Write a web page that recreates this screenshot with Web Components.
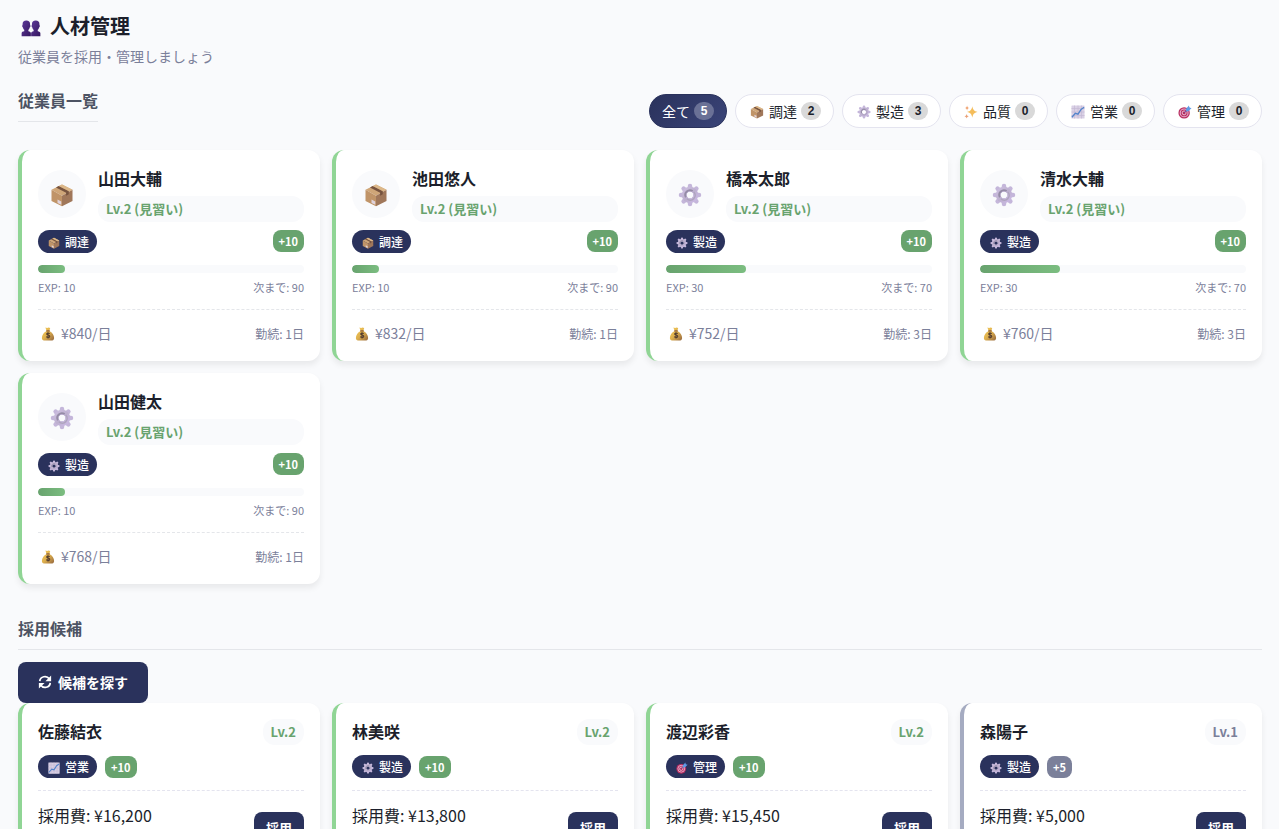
<!DOCTYPE html>
<html lang="ja">
<head>
<meta charset="utf-8">
<meta name="viewport" content="width=device-width, initial-scale=1">
<title>人材管理</title>
<style>
html {
	--navy: #2a325c;
	--green: #68a36e;
	--line: #e4e6ea;
	--muted: #7b809a;
	--soft: #f9fafc;
	background: var(--soft);
}

body {
	margin: 0;
	color: #1c1f2b;
	font: 16px/26px "Noto Sans CJK JP", sans-serif;
}
</style>
</head>
<body>
<staff-page></staff-page>

<script>
const ICONS = {
	people: `
<defs><linearGradient id="a" x2="1" y2="1"><stop stop-color="#5c3799"/><stop offset="1" stop-color="#35175f"/></linearGradient></defs>
<g fill="url(#a)">
<path d="M8.500 4c4 0 6 2 6 6v1c1 1 .8 3.500-.6 4-.4 2-1.100 3-2.100 3.800V21c2.500.3 4 1.300 4 3.500V29H1v-4.500C1 22 2.700 21.300 5.200 21v-2.200c-1-.8-1.700-1.800-2.100-3.800-1.400-.5-1.600-3-.6-4v-1c0-4 2-6 6-6z"/>
<path d="M23.500 4c4 0 6 2 6 6v1c1 1 .8 3.500-.6 4-.4 2-1.100 3-2.100 3.800V21c2.500.3 4.200 1.300 4.200 3.500V29H16.200v-4.500c0-2.200 1.500-3.200 4-3.500v-2.200c-1-.8-1.700-1.800-2.100-3.800-1.400-.5-1.600-3-.6-4v-1c0-4 2-6 6-6z"/>
</g>`,
	box: `
<path fill="#cfa678" d="M16 2 30 9 16 17 2 9z"/>
<path fill="#c09468" d="M2 9l14 8v14L2 24z"/>
<path fill="#a0775a" d="M30 9l-14 8v14l14-7z"/>
<path fill="#76533f" d="M8 6 11.500 4 25 11v4L21.500 17v-4z"/>
<path fill="#dcb88a" d="M12 4l4-2 14 7-4 2z"/>
<path fill="#e0d3dc" d="M10 22l5 2.500V29l-5-2.500z"/>`,
	gear: `
<defs><linearGradient id="a" x2="1" y2="1"><stop stop-color="#cbbdde"/><stop offset=".5" stop-color="#bdb0cf"/><stop offset="1" stop-color="#c9b8e2"/></linearGradient></defs>
<g fill="none" stroke="#c4b6da" stroke-width="6" stroke-linecap="round">
<path d="M16 4v5M16 23v5M4 16h5M23 16h5M7.500 7.500l3.500 3.500M21 21l3.500 3.500M24.500 7.500 21 11M11 21l-3.500 3.500"/>
</g>
<circle cx="16" cy="16" r="8" fill="none" stroke="url(#a)" stroke-width="6"/>
<path d="M10.500 19a6.300 6.300 0 0 1 9-8.300" fill="none" stroke="#958ca6" stroke-width="2.500"/>
<path d="M21 12a6.300 6.300 0 0 1-9 9" fill="none" stroke="#aea4bd" stroke-width="2"/>`,
	sparkles: `
<path fill="#f4bd5b" d="M19 3c1.500 8 4 11 12 13-8 2-10.500 5-12 13-1.500-8-4-11-12-13 8-2 10.500-5 12-13z"/>
<path fill="#ef9d67" d="M7 1c.6 4 1.500 5 5 6-3.500 1-4.400 2-5 6-.6-4-1.500-5-5-6 3.500-1 4.400-2 5-6z"/>
<path fill="#eaa177" d="M6 20c.6 4 1.500 5 5 6-3.500 1-4.400 2-5 5-.6-3-1.500-4-5-5 3.500-1 4.400-2 5-6z"/>`,
	chart: `
<rect x="1" y="1" width="30" height="30" rx="1" fill="#d9d0e5"/>
<path d="M1 8h30M1 16h30M1 24h30M8 1v30M16 1v30M24 1v30" stroke="#c3b7d3" stroke-width="1.500"/>
<path d="M2 28l8-9 6 2 7-11 7-5" fill="none" stroke="#5283cb" stroke-width="3"/>`,
	target: `
<circle cx="14" cy="18" r="13" fill="#b92d60"/>
<circle cx="14" cy="18" r="9" fill="none" stroke="#e6b1cf" stroke-width="2.500"/>
<circle cx="14" cy="18" r="4.500" fill="none" stroke="#ead0e2" stroke-width="2"/>
<path d="M14 18 26 6" stroke="#6a4894" stroke-width="2"/>
<path fill="#5d9be6" d="M18 9l7-8 1 5 5 1-7 7-6 1z"/>`,
	money: `
<defs><linearGradient id="a" x2="1" y2="1"><stop stop-color="#f5cb58"/><stop offset=".5" stop-color="#deb04e"/><stop offset="1" stop-color="#94663e"/></linearGradient></defs>
<path fill="url(#a)" d="M10 1l4 1 3-1 4 1-2 7c7 3 11 10 11 16 0 5-4 6-7 6H9c-4 0-7-2-7-6C2 19 6 12 13 9z"/>
<path d="M12 9h8" stroke="#926139" stroke-width="3"/>
<path d="M20 15c-2-2-7-2-7 1s7 2 7 5-5 4-8 1M16 12v14" fill="none" stroke="#503a2e" stroke-width="2.500"/>`,
	refresh: `
<path d="M4 14C5 3 20 0 26 9M28 18C27 29 12 32 6 23" fill="none" stroke="#fff" stroke-width="4"/>
<path fill="#fff" d="M30 1v13H17zM2 31V18h13z"/>`
};

const ROLES = {
	procure: {label: '調達', icon: 'box'},
	make: {label: '製造', icon: 'gear'},
	quality: {label: '品質', icon: 'sparkles'},
	sales: {label: '営業', icon: 'chart'},
	manage: {label: '管理', icon: 'target'}
};

const EMPLOYEES = [
	{name: '山田大輔', role: 'procure', exp: 10, pay: 840, days: 1},
	{name: '池田悠人', role: 'procure', exp: 10, pay: 832, days: 1},
	{name: '橋本太郎', role: 'make', exp: 30, pay: 752, days: 3},
	{name: '清水大輔', role: 'make', exp: 30, pay: 760, days: 3},
	{name: '山田健太', role: 'make', exp: 10, pay: 768, days: 1}
];

const CANDIDATES = [
	{name: '佐藤結衣', role: 'sales', level: 2, bonus: 10, fee: '16,200'},
	{name: '林美咲', role: 'make', level: 2, bonus: 10, fee: '13,800'},
	{name: '渡辺彩香', role: 'manage', level: 2, bonus: 10, fee: '15,450'},
	{name: '森陽子', role: 'make', level: 1, bonus: 5, fee: '5,000'}
];

const render = (host, html) => {
	host.attachShadow({mode: 'open'}).innerHTML = html;
};

class GameIcon extends HTMLElement {
	connectedCallback() {
		render(this, `
<style>
:host { display: inline-flex; flex: none; align-items: center; justify-content: center; }
svg { display: block; width: var(--icon-size, 14px); height: var(--icon-size, 14px); }
</style>
<svg viewBox="0 0 32 32" aria-hidden="true">${ICONS[this.getAttribute('name')]}</svg>`);
	}
}

class FilterTab extends HTMLElement {
	connectedCallback() {
		const icon = this.getAttribute('icon');
		render(this, `
<style>
:host { display: block; }
button {
	display: flex;
	align-items: center;
	gap: 4px;
	height: 34px;
	padding: 0 12px;
	border: 1px solid #e4e4ef;
	border-radius: 20px;
	background: #fff;
	color: #1c1f2b;
	font: 14px/22px "Liberation Sans", "Noto Sans CJK JP", sans-serif;
	cursor: pointer;
}
game-icon { width: 17px; padding-top: 2px; box-sizing: border-box; }
.label { padding-top: 2px; }
.count {
	box-sizing: border-box;
	min-width: 20px;
	padding: 0 6px;
	border-radius: 10px;
	background: #d9d9d9;
	font-size: 12px;
	font-weight: 700;
	line-height: 18px;
	text-align: center;
}
:host([active]) button {
	border-color: var(--navy);
	background: linear-gradient(135deg, #2a325c, #3a4478);
	color: #fff;
}
:host([active]) .count { background: #6a7196; }
</style>
<button type="button">${icon ? `<game-icon name="${icon}"></game-icon>` : ''}<span class="label"><slot></slot></span><span class="count">${this.getAttribute('count')}</span></button>`);
	}
}

class RoleChip extends HTMLElement {
	connectedCallback() {
		const role = ROLES[this.getAttribute('role-id')];
		render(this, `
<style>
:host {
	display: inline-flex;
	align-items: center;
	gap: 4px;
	padding: 2px 8px;
	border-radius: 12px;
	background: var(--navy);
	color: #fff;
	font-size: 12px;
	font-weight: 500;
	line-height: 19px;
}
game-icon { --icon-size: 12px; width: 15px; padding-top: 2px; box-sizing: border-box; }
</style>
<game-icon name="${role.icon}"></game-icon><span>${role.label}</span>`);
	}
}

class BonusBadge extends HTMLElement {
	connectedCallback() {
		render(this, `
<style>
:host {
	display: inline-block;
	padding: 2px 6px;
	border-radius: 8px;
	background: var(--green);
	color: #fff;
	font-size: 11px;
	font-weight: 700;
	line-height: 18px;
}
:host([low]) { background: var(--muted); }
</style>
<slot></slot>`);
	}
}

class LevelLabel extends HTMLElement {
	connectedCallback() {
		render(this, `
<style>
:host {
	display: block;
	padding: 2px 8px;
	border-radius: 12px;
	background: var(--soft);
	color: var(--green);
	font-size: 13px;
	font-weight: 700;
	line-height: 22px;
}
:host([low]) { color: var(--muted); }
</style>
<slot></slot>`);
	}
}

class StaffCard extends HTMLElement {
	connectedCallback() {
		render(this, `
<style>
:host {
	display: block;
	padding: 16px;
	border-left: 4px solid #90d595;
	border-radius: 12px;
	background: #fff;
	box-shadow: 0 4px 6px rgba(0, 0, 0, .07);
}
:host([low]) { border-left-color: #a5abc1; }
</style>
<slot></slot>`);
	}
}

class EmployeeCard extends HTMLElement {
	set data(e) {
		render(this, `
<style>
:host { display: block; }
.head { display: flex; align-items: center; gap: 12px; }
.avatar {
	display: flex;
	align-items: center;
	justify-content: center;
	width: 48px;
	height: 48px;
	border-radius: 50%;
	background: var(--soft);
}
.avatar game-icon { --icon-size: 24px; padding-top: 2px; }
.who { flex: 1; }
h3 { margin: 0 0 6px; font-size: 16px; font-weight: 700; line-height: 24px; }
.row { display: flex; justify-content: space-between; align-items: center; }
.tags { align-items: flex-start; margin: 8px 0 12px; }
.bar { height: 8px; border-radius: 4px; background: var(--soft); overflow: hidden; }
.bar div { height: 100%; border-radius: 4px; background: linear-gradient(90deg, #68a36e, #7bbd80); }
.exp { margin: 5px 0 13px; color: var(--muted); font-size: 11px; line-height: 18px; }
.foot { padding-top: 12px; border-top: 1px dashed var(--line); color: var(--muted); line-height: 23px; }
.pay { display: flex; align-items: center; gap: 4px; font-size: 14px; }
.pay game-icon { width: 19px; padding-top: 1px; }
.days { font-size: 12px; }
</style>
<staff-card>
<div class="head">
	<div class="avatar"><game-icon name="${ROLES[e.role].icon}"></game-icon></div>
	<div class="who"><h3>${e.name}</h3><level-label>Lv.2 (見習い)</level-label></div>
</div>
<div class="row tags"><role-chip role-id="${e.role}"></role-chip><bonus-badge>+10</bonus-badge></div>
<div class="bar"><div style="width: ${e.exp}%"></div></div>
<div class="row exp"><span>EXP: ${e.exp}</span><span>次まで: ${100 - e.exp}</span></div>
<div class="row foot">
	<span class="pay"><game-icon name="money"></game-icon>¥${e.pay}/日</span>
	<span class="days">勤続: ${e.days}日</span>
</div>
</staff-card>`);
	}
}

class CandidateCard extends HTMLElement {
	set data(c) {
		const low = c.level < 2 ? 'low' : '';
		render(this, `
<style>
:host { display: block; }
.row { display: flex; justify-content: space-between; align-items: center; }
h3 { margin: 0 0 2px; font-size: 16px; font-weight: 700; line-height: 24px; }
.tags { display: flex; align-items: flex-end; gap: 8px; margin: 10px 0 12px; }
.foot { padding-top: 12px; border-top: 1px dashed #e4e4ef; }
.cost { min-height: 50px; line-height: 24px; }
button {
	padding: 6px 12px;
	border: 0;
	border-radius: 8px;
	background: var(--navy);
	color: #fff;
	font: 700 13px/20px "Noto Sans CJK JP", sans-serif;
	cursor: pointer;
}
</style>
<staff-card ${low}>
<div class="row"><h3>${c.name}</h3><level-label ${low}>Lv.${c.level}</level-label></div>
<div class="tags"><role-chip role-id="${c.role}"></role-chip><bonus-badge ${low}>+${c.bonus}</bonus-badge></div>
<div class="row foot"><div class="cost">採用費: ¥${c.fee}</div><button type="button">採用</button></div>
</staff-card>`);
	}
}

class StaffPage extends HTMLElement {
	connectedCallback() {
		const tabs = Object.entries(ROLES).map(([id, role]) => {
			const count = EMPLOYEES.filter(e => e.role === id).length;
			return `<filter-tab icon="${role.icon}" count="${count}">${role.label}</filter-tab>`;
		}).join('');

		render(this, `
<style>
:host { display: block; padding: 10px 17px 24px 18px; }
header { margin-bottom: 19px; }
h1 { display: flex; align-items: center; gap: 6px; margin: 0 0 3px; font-size: 20px; font-weight: 700; line-height: 32px; }
h1 game-icon { --icon-size: 20px; width: 26px; padding-top: 3px; }
header p { margin: 0; color: var(--muted); font-size: 14px; line-height: 23px; }
h2 {
	margin: 0 0 12px;
	padding-bottom: 8px;
	border-bottom: 1px solid var(--line);
	color: #4d5363;
	font-size: 16px;
	font-weight: 700;
	line-height: 26px;
}
.bar { display: flex; justify-content: space-between; align-items: center; margin-bottom: 16px; }
nav { display: flex; gap: 8px; }
.grid { display: grid; grid-template-columns: repeat(auto-fill, minmax(280px, 1fr)); gap: 12px; }
.hiring { margin-top: 31px; }
.search {
	display: flex;
	align-items: center;
	gap: 6px;
	padding: 9px 20px;
	border: 0;
	border-radius: 8px;
	background: var(--navy);
	color: #fff;
	font: 700 14px/23px "Noto Sans CJK JP", sans-serif;
	cursor: pointer;
}
.search game-icon { padding-bottom: 2px; }
</style>
<header>
	<h1><game-icon name="people"></game-icon>人材管理</h1>
	<p>従業員を採用・管理しましょう</p>
</header>
<section>
	<div class="bar">
		<h2>従業員一覧</h2>
		<nav><filter-tab active count="${EMPLOYEES.length}">全て</filter-tab>${tabs}</nav>
	</div>
	<div class="grid" id="employees"></div>
</section>
<section class="hiring">
	<h2>採用候補</h2>
	<button class="search" type="button"><game-icon name="refresh"></game-icon>候補を探す</button>
	<div class="grid" id="candidates"></div>
</section>`);

		this.fill('#employees', 'employee-card', EMPLOYEES);
		this.fill('#candidates', 'candidate-card', CANDIDATES);
	}

	fill(selector, tag, list) {
		const grid = this.shadowRoot.querySelector(selector);
		list.forEach(item => {
			const card = document.createElement(tag);
			card.data = item;
			grid.appendChild(card);
		});
	}
}

customElements.define('game-icon', GameIcon);
customElements.define('filter-tab', FilterTab);
customElements.define('role-chip', RoleChip);
customElements.define('bonus-badge', BonusBadge);
customElements.define('level-label', LevelLabel);
customElements.define('staff-card', StaffCard);
customElements.define('employee-card', EmployeeCard);
customElements.define('candidate-card', CandidateCard);
customElements.define('staff-page', StaffPage);
</script>
</body>
</html>
